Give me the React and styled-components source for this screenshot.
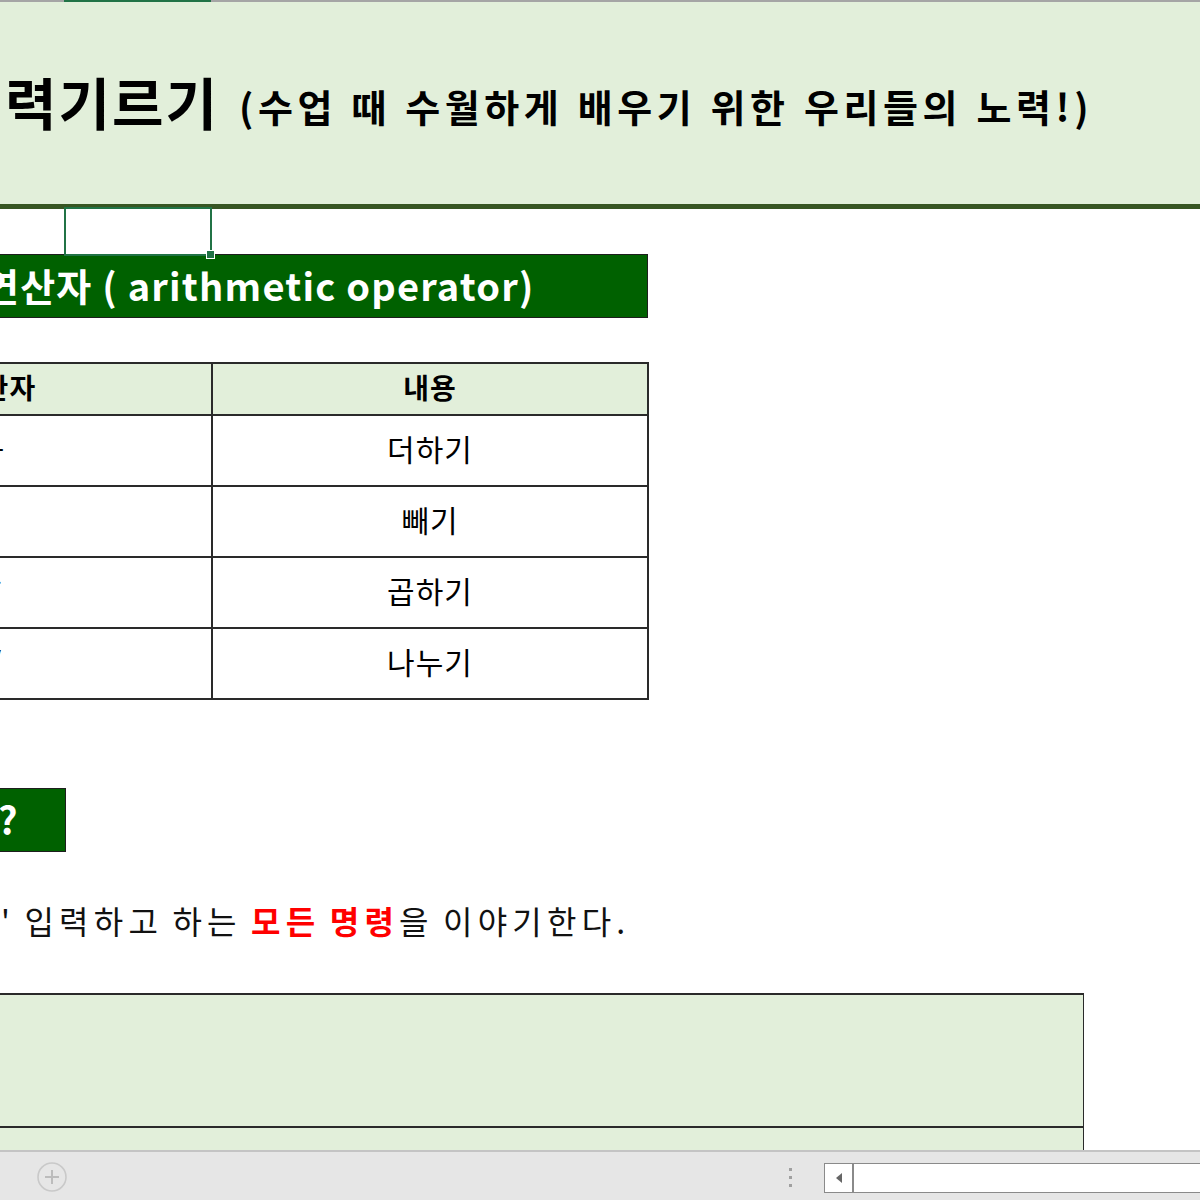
import React from 'react';
import styled, { createGlobalStyle } from 'styled-components';

const SHIFT = 221;

const GlobalStyle = createGlobalStyle`
  html, body {
    margin: 0;
    padding: 0;
    background: #ffffff;
  }
  body {
    font-family: "Noto Sans CJK KR", "Noto Sans", sans-serif;
  }
`;

const rows = [
  { op: '+', label: '더하기' },
  { op: '-', label: '빼기' },
  { op: '*', label: '곱하기' },
  { op: '/', label: '나누기' },
];

const App = () => (
  <Window>
    <GlobalStyle />
    <Viewport>
      <Sheet>
        <HeaderStrip>
          <StripPart $w={SHIFT + 64} />
          <StripPart $w={147} $active />
          <StripPart $grow />
        </HeaderStrip>

        <TitleBand>
          <TitleLine>
            <TitleMain>력기르기</TitleMain>
            <TitleSub>(수업 때 수월하게 배우기 위한 우리들의 노력!)</TitleSub>
          </TitleLine>
        </TitleBand>

        <CellRow $h={45}>
          <Spacer $w={SHIFT + 64} />
          <SelectedCell>
            <Handle />
          </SelectedCell>
        </CellRow>

        <GreenBar $w={SHIFT + 648}>
          <BarText $indent={SHIFT - 17}>연산자 ( arithmetic operator)</BarText>
        </GreenBar>

        <Gap $h={44} />

        <OpTable>
          <colgroup>
            <col style={{ width: SHIFT + 211 }} />
            <col style={{ width: 436 }} />
          </colgroup>
          <thead>
            <tr>
              <HeadCell>연산자</HeadCell>
              <HeadCell>내용</HeadCell>
            </tr>
          </thead>
          <tbody>
            {rows.map((r) => (
              <tr key={r.label}>
                <BodyCell>{r.op}</BodyCell>
                <BodyCell>{r.label}</BodyCell>
              </tr>
            ))}
          </tbody>
        </OpTable>

        <Gap $h={88} />

        <GreenBar $w={SHIFT + 66}>
          <BarText $indent={SHIFT - 3}>?</BarText>
        </GreenBar>

        <SentenceRow>
          <Sentence>
            ' 입력하고 하는 <Red>모든 명령</Red>을 이야기한다.
          </Sentence>
        </SentenceRow>

        <NoteBox $w={SHIFT + 1084} />
        <NoteTail $w={SHIFT + 1084} />
      </Sheet>
    </Viewport>

    <BottomBar>
      <AddSheet>
        <svg width="32" height="32" viewBox="0 0 32 32">
          <circle cx="16" cy="16" r="14" fill="none" stroke="#c9c9c9" strokeWidth="1.6" />
          <path d="M16 9v14M9 16h14" stroke="#bcbcbc" strokeWidth="2" />
        </svg>
      </AddSheet>
      <Dots>
        <Dot />
        <Dot />
        <Dot />
      </Dots>
      <ScrollTrack>
        <ScrollButton>
          <svg width="10" height="12" viewBox="0 0 10 12">
            <path d="M8 1L2 6l6 5z" fill="#666" />
          </svg>
        </ScrollButton>
      </ScrollTrack>
    </BottomBar>
  </Window>
);

const Window = styled.div`
  width: 1200px;
  height: 1200px;
  display: flex;
  flex-direction: column;
  overflow: hidden;
  background: #fff;
`;

const Viewport = styled.div`
  flex: 1;
  overflow: hidden;
`;

const Sheet = styled.div`
  width: ${1200 + SHIFT}px;
  margin-left: -${SHIFT}px;
  display: flex;
  flex-direction: column;
`;

const HeaderStrip = styled.div`
  display: flex;
  height: 2px;
`;

const StripPart = styled.div`
  width: ${({ $w }) => ($w ? `${$w}px` : 'auto')};
  flex: ${({ $grow }) => ($grow ? 1 : 'none')};
  background: ${({ $active }) => ($active ? '#217346' : '#a5a5a5')};
`;

const TitleBand = styled.div`
  height: 202px;
  background: #e2efda;
  border-bottom: 5px solid #375623;
  display: flex;
  align-items: center;
`;

const TitleLine = styled.div`
  display: flex;
  align-items: baseline;
  margin-left: ${SHIFT + 5}px;
  margin-top: -6px;
  color: #000;
  font-weight: 700;
  white-space: nowrap;
`;

const TitleMain = styled.span`
  font-size: 56px;
  letter-spacing: 2px;
  margin-right: 20px;
`;

const TitleSub = styled.span`
  font-size: 38px;
  letter-spacing: 4.6px;
  word-spacing: 1px;
  position: relative;
  top: -3px;
`;

const CellRow = styled.div`
  display: flex;
  height: ${({ $h }) => $h}px;
`;

const Spacer = styled.div`
  width: ${({ $w }) => $w}px;
`;

const SelectedCell = styled.div`
  position: relative;
  width: 148px;
  height: 49px;
  margin-top: -2px;
  box-sizing: border-box;
  border: 2px solid #217346;
  box-shadow: inset 0 0 0 1px #ffffff;
  background: #fff;
`;

const Handle = styled.div`
  position: absolute;
  right: -5px;
  bottom: -5px;
  width: 7px;
  height: 7px;
  background: #217346;
  border: 1px solid #fff;
`;

const GreenBar = styled.div`
  width: ${({ $w }) => $w}px;
  height: 64px;
  box-sizing: border-box;
  background: #006100;
  border: 1px solid #1e1e1e;
  display: flex;
  align-items: center;
  overflow: hidden;
`;

const BarText = styled.span`
  margin-left: ${({ $indent }) => $indent}px;
  margin-top: -4px;
  color: #fff;
  font-size: 38px;
  font-weight: 700;
  letter-spacing: 1.2px;
  white-space: nowrap;
`;

const Gap = styled.div`
  height: ${({ $h }) => $h}px;
`;

const OpTable = styled.table`
  border-collapse: collapse;
  table-layout: fixed;
  width: ${SHIFT + 647}px;
`;

const HeadCell = styled.th`
  height: 46px;
  padding: 0 0 4px;
  background: #e2efda;
  border: 2px solid #2a2a2a;
  color: #000;
  font-size: 28px;
  font-weight: 700;
  text-align: center;
  letter-spacing: 1px;
`;

const BodyCell = styled.td`
  height: 64px;
  padding: 0 0 5px;
  border: 2px solid #2a2a2a;
  color: #000;
  font-size: 30px;
  font-weight: 400;
  text-align: center;
  letter-spacing: 1px;
`;

const SentenceRow = styled.div`
  height: 141px;
  display: flex;
  align-items: center;
`;

const Sentence = styled.p`
  margin: -6px 0 0 ${SHIFT + 1}px;
  font-size: 32px;
  letter-spacing: 5.2px;
  word-spacing: -3px;
  color: #111;
  white-space: nowrap;
`;

const Red = styled.span`
  color: #ff0000;
  font-weight: 700;
`;

const NoteBox = styled.div`
  width: ${({ $w }) => $w}px;
  height: 135px;
  box-sizing: border-box;
  background: #e2efda;
  border-top: 2px solid #2a2a2a;
  border-right: 1px solid #2a2a2a;
  border-bottom: 2px solid #2a2a2a;
`;

const NoteTail = styled.div`
  width: ${({ $w }) => $w}px;
  height: 40px;
  box-sizing: border-box;
  background: #e2efda;
  border-right: 1px solid #2a2a2a;
`;

const BottomBar = styled.div`
  height: 50px;
  flex: none;
  box-sizing: border-box;
  background: #e6e6e6;
  border-top: 2px solid #c4c4c4;
  display: flex;
  align-items: center;
`;

const AddSheet = styled.div`
  width: 32px;
  height: 32px;
  margin-left: 36px;
  margin-top: 2px;
  display: flex;
`;

const Dots = styled.div`
  margin-left: 721px;
  margin-top: 2px;
  display: flex;
  flex-direction: column;
  gap: 5px;
`;

const Dot = styled.div`
  width: 3px;
  height: 3px;
  background: #a0a0a0;
`;

const ScrollTrack = styled.div`
  margin-left: 32px;
  margin-top: 4px;
  flex: 1;
  height: 30px;
  margin-right: -10px;
  box-sizing: border-box;
  background: #fff;
  border: 1px solid #8a8a8a;
  display: flex;
`;

const ScrollButton = styled.div`
  width: 29px;
  box-sizing: border-box;
  border-right: 2px solid #8a8a8a;
  display: flex;
  align-items: center;
  justify-content: center;
`;

export default App;
